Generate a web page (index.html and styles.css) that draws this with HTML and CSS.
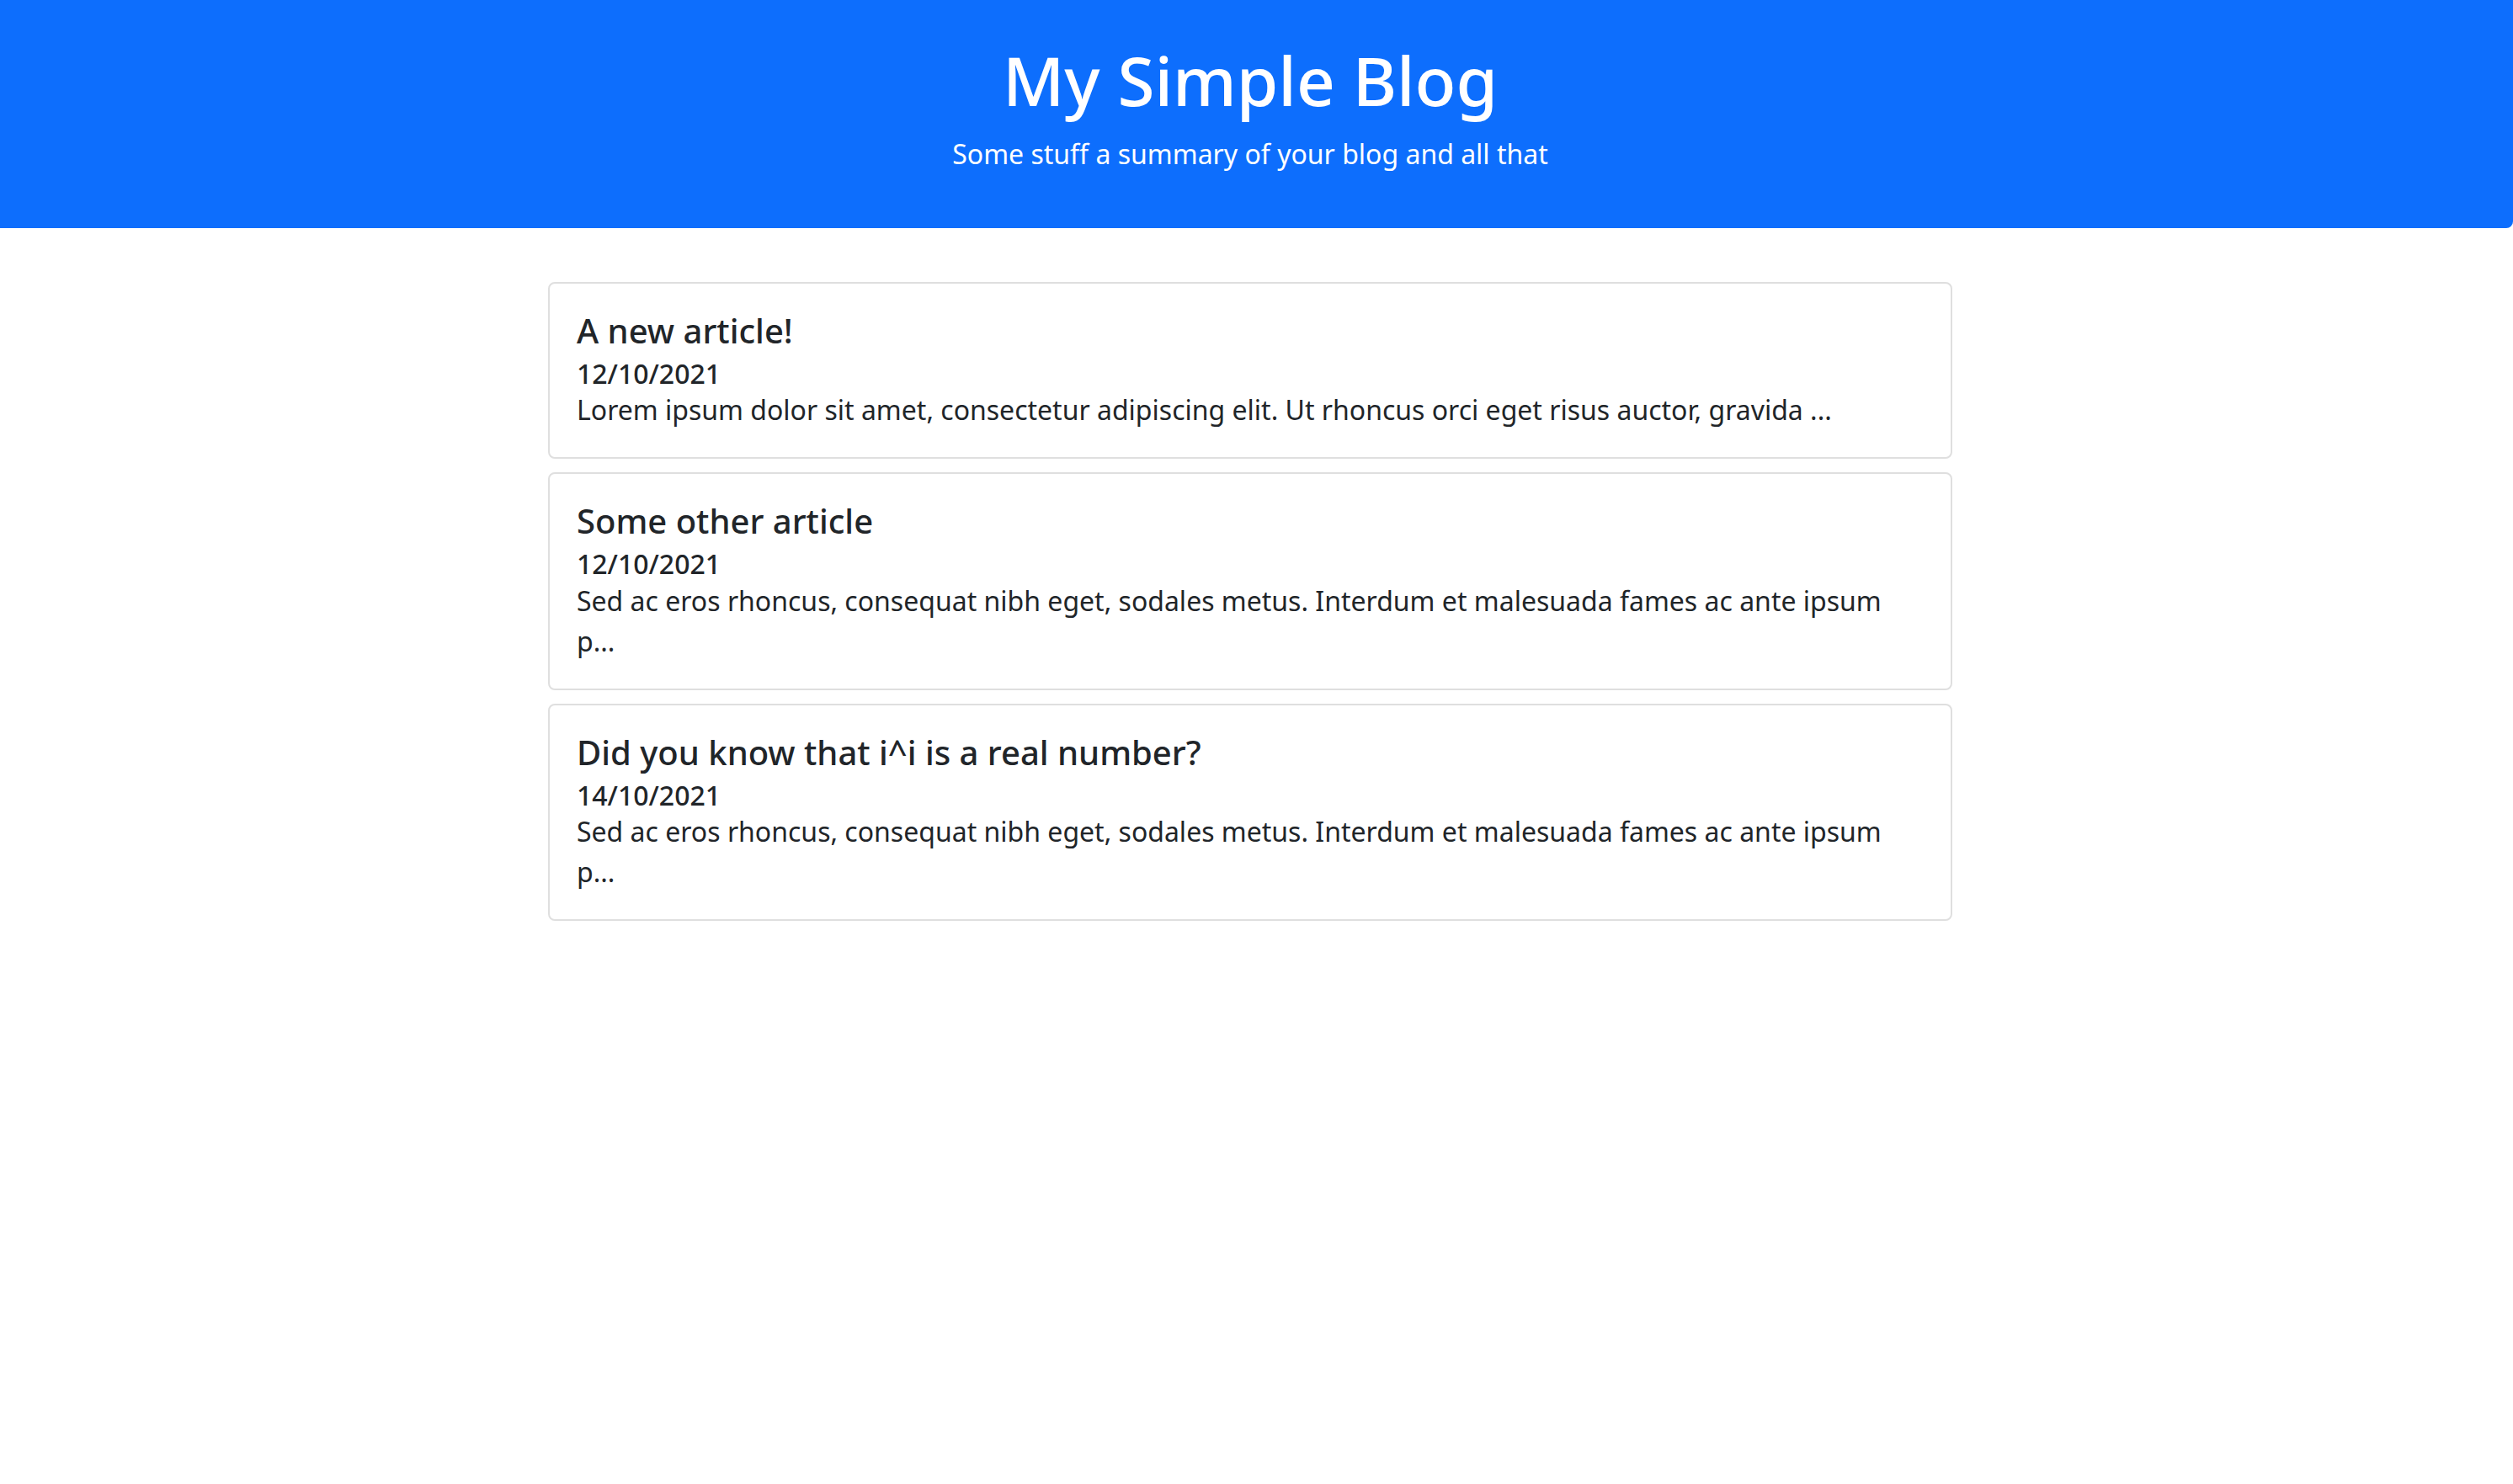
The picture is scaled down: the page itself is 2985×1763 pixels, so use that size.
FILE: index.html
```html
<!DOCTYPE html>
<html lang="en">
<head>
<meta charset="utf-8">
<title>My Simple Blog</title>
<link rel="stylesheet" href="styles.css">
</head>
<body>
<header class="hero">
  <h1 class="hero-title">My Simple Blog</h1>
  <p class="hero-lead">Some stuff a summary of your blog and all that</p>
</header>
<main class="page">
  <div class="list">
    <article class="card">
      <h5 class="card-title">A new article!</h5>
      <h6 class="card-date">12/10/2021</h6>
      <p class="card-text">Lorem ipsum dolor sit amet, consectetur adipiscing elit. Ut rhoncus orci eget risus auctor, gravida ...</p>
    </article>
    <article class="card">
      <h5 class="card-title">Some other article</h5>
      <h6 class="card-date">12/10/2021</h6>
      <p class="card-text">Sed ac eros rhoncus, consequat nibh eget, sodales metus. Interdum et malesuada fames ac ante ipsum p...</p>
    </article>
    <article class="card">
      <h5 class="card-title">Did you know that i^i is a real number?</h5>
      <h6 class="card-date">14/10/2021</h6>
      <p class="card-text">Sed ac eros rhoncus, consequat nibh eget, sodales metus. Interdum et malesuada fames ac ante ipsum p...</p>
    </article>
  </div>
</main>
</body>
</html>
```
FILE: styles.css
```css
* { box-sizing: border-box; }
html, body {
  margin: 0;
  padding: 0;
  background: #fff;
}
body {
  font-family: "Noto Sans", "Open Sans", "DejaVu Sans", sans-serif;
  font-size: 32px;
  line-height: 1.5;
  color: #212529;
}
.hero {
  background: #0d6efd;
  color: #fff;
  text-align: center;
  padding: 47px 15px 64px 0;
  border-bottom-right-radius: 8px;
}
.hero-title {
  margin: 0 0 16px;
  font-size: 80px;
  font-weight: 500;
  line-height: 1.2;
}
.hero-lead {
  margin: 0;
  font-size: 32px;
  line-height: 1.5;
}
.page {
  padding: 64px 15px 0 0;
}
.list {
  width: 1668px;
  margin: 0 auto;
  display: flex;
  flex-direction: column;
  gap: 16px;
}
.card {
  border: 2px solid #dfdfdf;
  border-radius: 8px;
  padding: 32px;
}
.card-title {
  margin: 0 0 16px;
  font-size: 40px;
  font-weight: 500;
  line-height: 1.2;
}
.card-date {
  margin: -8px 0 0;
  font-size: 32px;
  font-weight: 500;
  line-height: 1.2;
}
.card-text {
  margin: 0;
  font-size: 32px;
  line-height: 1.5;
}
```
